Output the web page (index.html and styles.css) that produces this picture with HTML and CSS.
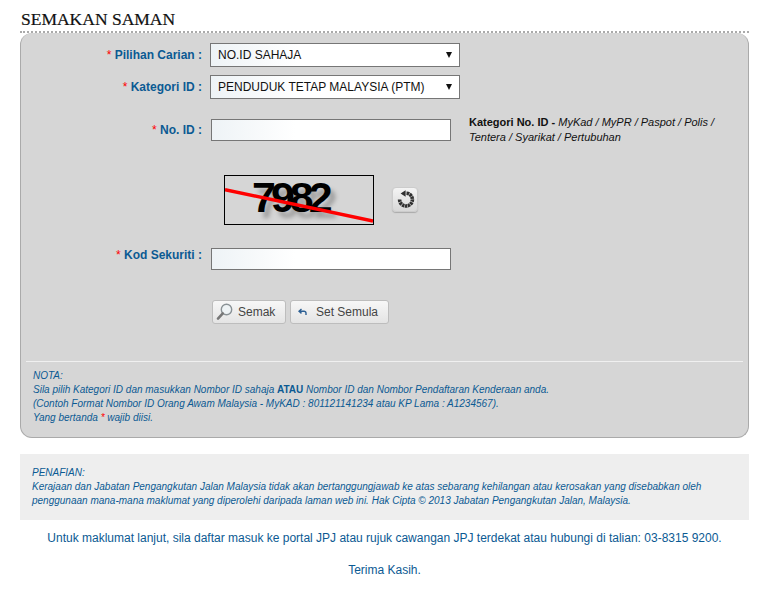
FILE: index.html
```html
<!DOCTYPE html>
<html lang="ms">
<head>
<meta charset="utf-8">
<title>Semakan Saman</title>
<link rel="stylesheet" href="styles.css">
</head>
<body>
<main class="page">
  <h1 class="title">Semakan Saman</h1>
  <form class="panel">
    <div class="form">
      <label class="label row-select"><span class="req">*</span> Pilihan Carian :</label>
      <div class="select row-select"><span>NO.ID SAHAJA</span><i class="arrow"></i></div>

      <label class="label row-select second"><span class="req">*</span> Kategori ID :</label>
      <div class="select row-select second"><span>PENDUDUK TETAP MALAYSIA (PTM)</span><i class="arrow"></i></div>

      <label class="label row-id"><span class="req">*</span> No. ID :</label>
      <div class="field-id row-id">
        <div class="input"></div>
        <p class="hint"><b>Kategori No. ID -</b> <i>MyKad / MyPR / Paspot / Polis /</i><br><i>Tentera / Syarikat / Pertubuhan</i></p>
      </div>

      <div class="captcha-row">
        <div class="captcha">
          <span class="captcha-text">7982</span>
          <svg class="captcha-line" width="148" height="48" viewBox="0 0 148 48"><path d="M0 13.7L148 45" stroke="#f00" stroke-width="3.4" fill="none"/></svg>
        </div>
        <button type="button" class="refresh" aria-label="Muat semula">
          <svg width="19" height="19" viewBox="0 0 19 19"><path d="M3.6 9.6a6.4 6.4 0 1 0 6.4-6.4" fill="none" stroke="#303030" stroke-width="3.6" stroke-dasharray="2.4 .5"/><path d="M9.6 .2v6.6L4.6 3.6z" fill="#303030"/></svg>
        </button>
      </div>

      <label class="label row-code"><span class="req">*</span> Kod Sekuriti :</label>
      <div class="input row-code"></div>

      <div class="buttons">
        <button type="button" class="btn btn-search">
          <svg width="17" height="18" viewBox="0 0 17 18"><circle cx="10.5" cy="6.5" r="5.2" fill="#eef3f5" stroke="#8a9296" stroke-width="1.4"/><path d="M6.8 10.4L2 15.6" stroke="#777" stroke-width="2.6" stroke-linecap="round"/></svg>
          Semak
        </button>
        <button type="button" class="btn btn-reset">
          <svg width="10" height="9" viewBox="0 0 10 9"><path d="M3.5 1L1 3.2l2.5 2.2M1.5 3.2H6a2 2 0 0 1 2 2V7" fill="none" stroke="#2c5f93" stroke-width="1.4"/></svg>
          Set Semula
        </button>
      </div>
    </div>
    <div class="note">
      <p>NOTA:</p>
      <p>Sila pilih Kategori ID dan masukkan Nombor ID sahaja <b>ATAU</b> Nombor ID dan Nombor Pendaftaran Kenderaan anda.</p>
      <p>(Contoh Format Nombor ID Orang Awam Malaysia - MyKAD : 801121141234 atau KP Lama : A1234567).</p>
      <p>Yang bertanda <span class="req">*</span> wajib diisi.</p>
    </div>
  </form>
  <section class="disclaimer">
    <p>PENAFIAN:</p>
    <p>Kerajaan dan Jabatan Pengangkutan Jalan Malaysia tidak akan bertanggungjawab ke atas sebarang kehilangan atau kerosakan yang disebabkan oleh penggunaan mana-mana maklumat yang diperolehi daripada laman web ini. Hak Cipta © 2013 Jabatan Pengangkutan Jalan, Malaysia.</p>
  </section>
  <p class="contact">Untuk maklumat lanjut, sila daftar masuk ke portal JPJ atau rujuk cawangan JPJ terdekat atau hubungi di talian: 03-8315 9200.</p>
  <p class="thanks">Terima Kasih.</p>
</main>
</body>
</html>
```

FILE: styles.css
```css
* { box-sizing: border-box; }
html, body { margin: 0; background: #fff; }
body { font-family: "Liberation Sans", Arial, sans-serif; color: #0b5a93; overflow: hidden; }
p { margin: 0; }
.page { width: 729px; margin-left: 20px; }
.title {
  margin: 0; padding: 9px 0 0 1px; height: 33px;
  font: 400 17.5px/20px "Liberation Serif", serif;
  text-transform: uppercase; color: #111; -webkit-text-stroke: .2px #111;
  border-bottom: 2px dotted #aaa;
}
.panel {
  background: #d6d6d6; border: 1px solid #aaa; border-top: 0;
  border-radius: 12px; height: 405px; display: flex; flex-direction: column;
}
.form {
  display: grid; grid-template-columns: 181px 1fr; column-gap: 8px;
  padding-top: 10px; height: 328px; align-content: start;
}
.label { font-size: 12px; font-weight: 700; text-align: right; line-height: 24px; color: #0b5a93; }
.req { color: #f00; font-weight: 400; }
.select {
  width: 250px; height: 24px; border: 1px solid #767676; background: linear-gradient(90deg, #eef3f6, #fff 35%);
  display: flex; align-items: center; justify-content: space-between;
  padding: 0 7px; font-size: 12px; color: #111;
}
.second { margin-top: 8px; }
.arrow { width: 0; height: 0; border: 3.5px solid transparent; border-top: 6px solid #111; border-bottom: 0; }
.row-id { margin-top: 20px; }
.field-id { display: flex; gap: 18px; }
.input {
  width: 240px; height: 22px; margin-left: 1px; border: 1px solid #767676;
  background: linear-gradient(90deg, #eef3f6, #fff 35%);
}
.label.row-id { line-height: 22px; }
.label.row-code { line-height: 14px; }
.hint { width: 262px; font-size: 11px; line-height: 15px; color: #111; margin-top: -4px; }
.captcha-row {
  grid-column: 1 / -1; display: flex; align-items: flex-start; padding-left: 203px; margin-top: 30px; gap: 18px;
  height: 50px;
}
.captcha { position: relative; width: 150px; height: 50px; border: 1px solid #000; }
.captcha-text {
  display: block; padding-left: 27px; font: 700 43px/42px "Liberation Sans", sans-serif;
  letter-spacing: -5px; color: #000; text-shadow: 5px 6px 4px #a0a0a0;
}
.captcha-line { position: absolute; left: 0; top: 0; }
.refresh {
  width: 26px; height: 25px; margin-top: 12px; padding: 0; border: 1px solid #ccc; border-radius: 4px;
  background: linear-gradient(#f4f4f4, #d8d8d8); display: flex; align-items: center; justify-content: center;
  box-shadow: 0 1px 1px #aaa;
}
.row-code { margin-top: 23px; }
.buttons { grid-column: 2; display: flex; gap: 4px; margin-top: 30px; margin-left: 2px; }
.btn {
  height: 24px; padding: 0; border: 1px solid #bdbdbd; border-radius: 3px;
  background: linear-gradient(#f7f7f7, #e4e4e4);
  font: 12px "Liberation Sans", sans-serif; color: #444;
  display: flex; align-items: center;
}
.btn-search { width: 74px; padding-left: 3px; gap: 5px; }
.btn-reset { width: 99px; padding-left: 7px; gap: 8px; }
.note {
  margin: 0 5px; border-top: 1px solid #f0f0f0; padding: 7px 7px 0;
  font-size: 10px; line-height: 14px; font-style: italic; color: #0b5a93;
}
.note b { font-style: normal; }
.disclaimer {
  margin-top: 16px; height: 66px; background: #eee; padding: 12px 12px 0;
  font-size: 10px; line-height: 14px; font-style: italic; color: #0b5a93;
}
.contact { margin-top: 11px; font-size: 12px; line-height: 14px; text-align: center; }
.thanks { margin-top: 18px; font-size: 12px; line-height: 14px; text-align: center; }
```
